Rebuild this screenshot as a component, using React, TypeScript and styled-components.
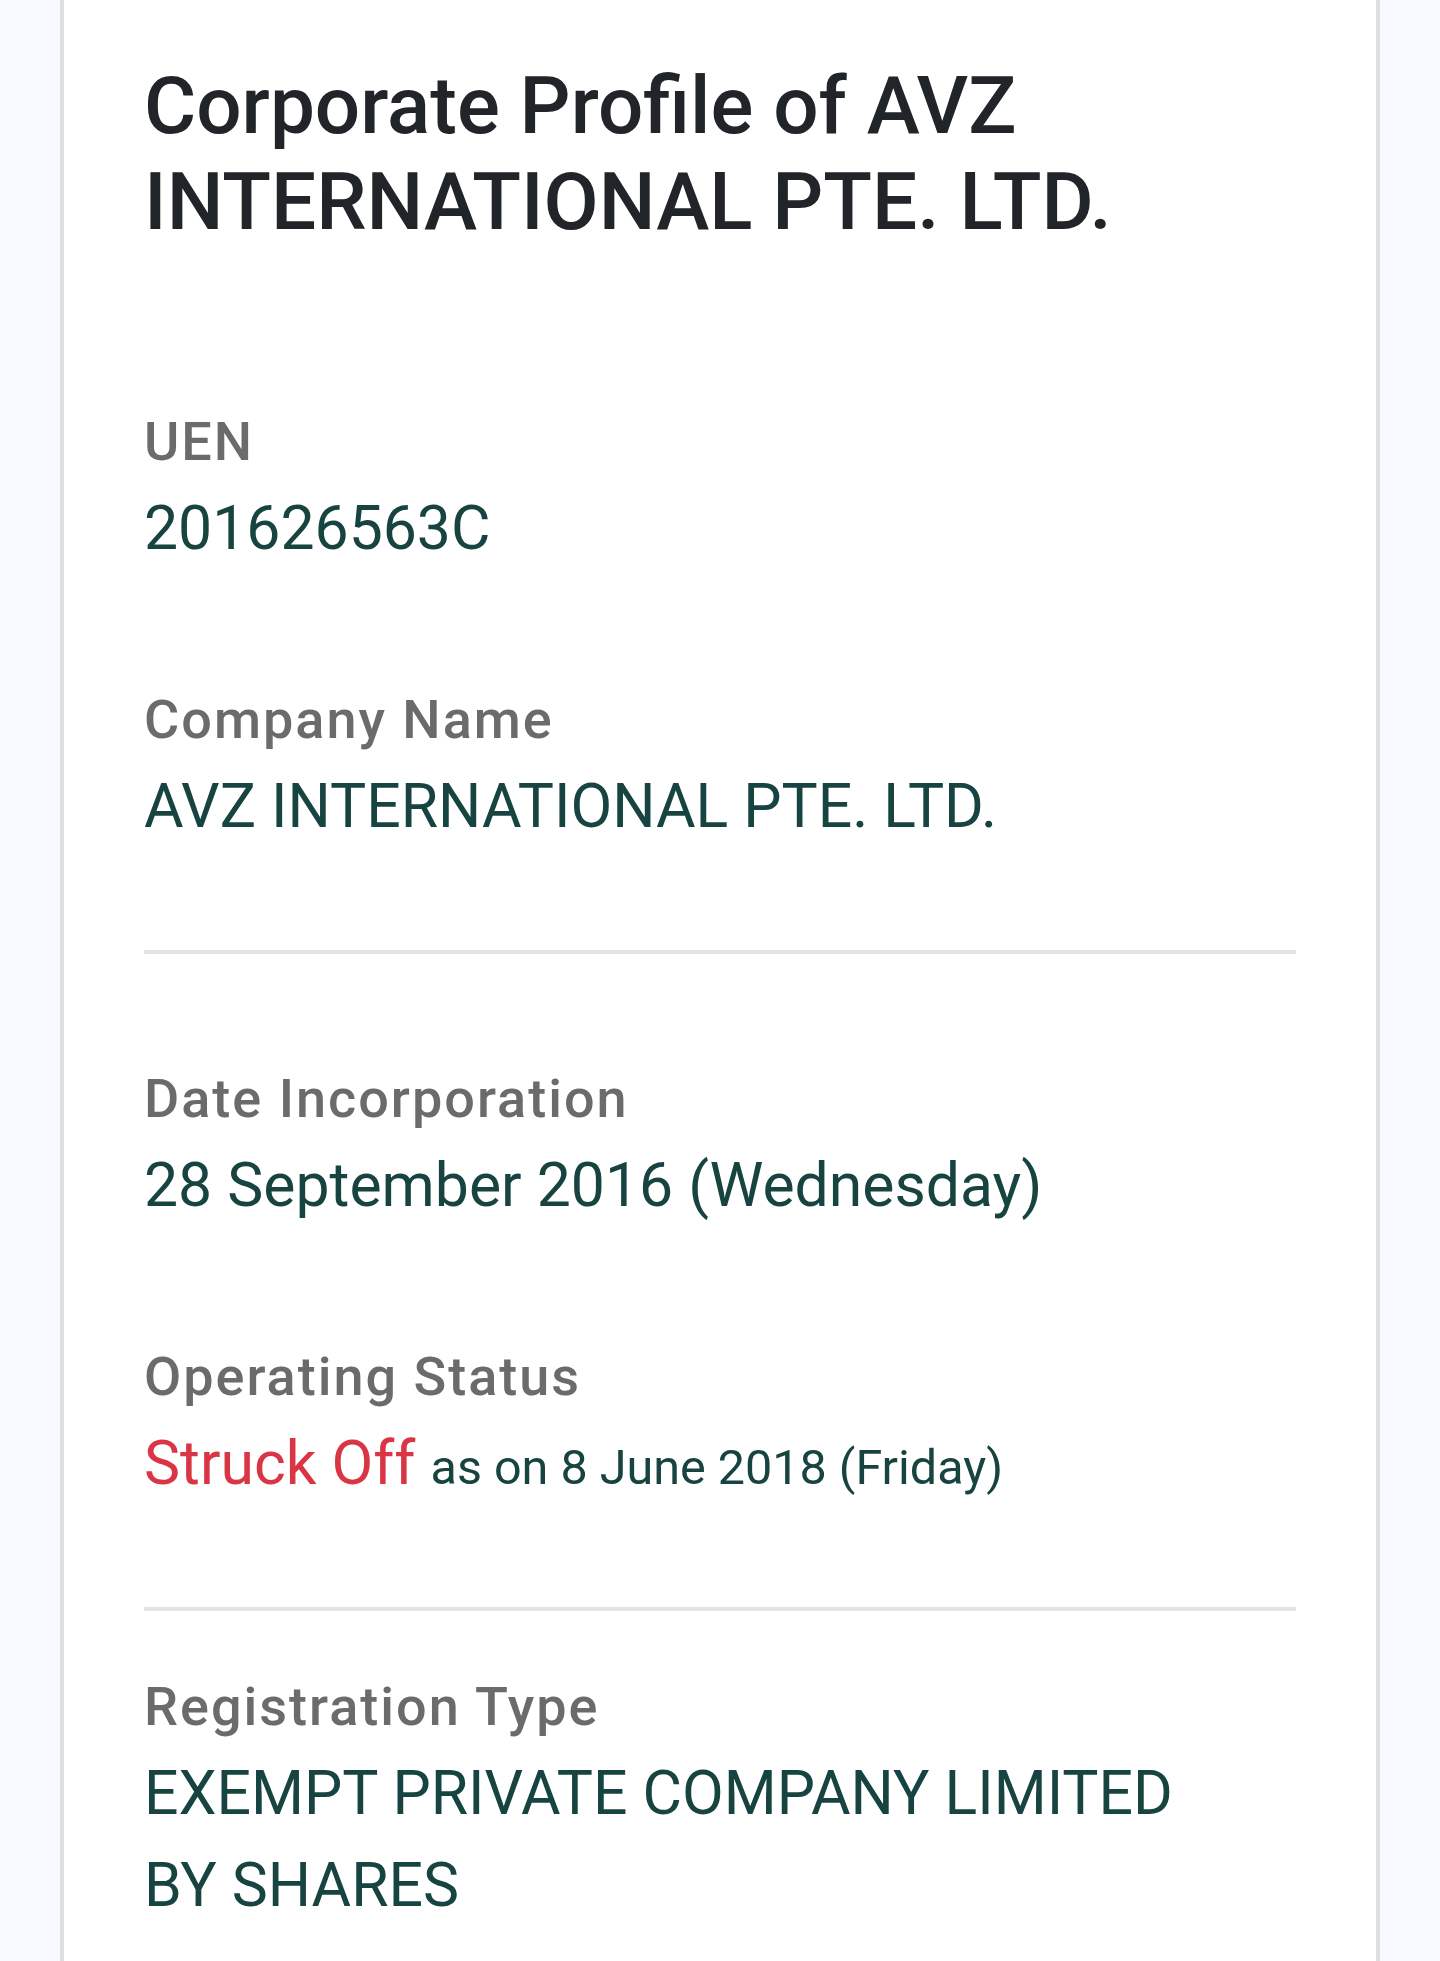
import React from "react";
import styled, { createGlobalStyle } from "styled-components";

const GlobalStyle = createGlobalStyle`
  html, body {
    margin: 0;
    padding: 0;
    background: #f6f9fe;
  }
  body {
    font-family: Roboto, "Noto Sans", "Liberation Sans", sans-serif;
  }
`;

const Page = styled.div`
  display: flex;
  justify-content: center;
  min-height: 1961px;
  background: #f6f9fe;
`;

const Card = styled.main`
  display: flex;
  flex-direction: column;
  width: 1152px;
  background: #ffffff;
  border-left: 4px solid #dedede;
  border-right: 4px solid #dedede;
  padding: 58px 80px 0;
  box-sizing: content-box;
`;

const Title = styled.h1`
  margin: 0 0 151px;
  font-family: Roboto, "Liberation Sans", sans-serif;
  font-weight: 500;
  font-size: 80px;
  line-height: 96px;
  color: #212529;
`;

const Field = styled.section`
  margin-bottom: 97px;

  & + & {
    margin-top: 7px;
  }

  &:last-child {
    margin-bottom: 0;
  }
`;

const Label = styled.div`
  margin-bottom: 1px;
  font-family: Roboto, "Liberation Sans", sans-serif;
  font-weight: 500;
  font-size: 54px;
  line-height: 81px;
  color: #6b6b6b;
  letter-spacing: 2px;
`;

const Value = styled.div`
  font-family: Roboto, "Liberation Sans", sans-serif;
  font-weight: 400;
  font-size: 60.7px;
  line-height: 92px;
  color: #174441;
`;

const Status = styled.span`
  color: #d93545;
`;

const Since = styled.span`
  font-size: 48.5px;
  line-height: 1;
  color: #174441;
`;

const Divider = styled.hr<{ $after: number }>`
  border: 0;
  height: 4px;
  width: 100%;
  flex-shrink: 0;
  background: #e4e4e4;
  margin: 0 0 ${(p) => p.$after}px;
`;

export default function App() {
  return (
    <>
      <GlobalStyle />
      <Page>
        <Card>
          <Title>
            Corporate Profile of AVZ
            <br />
            INTERNATIONAL PTE. LTD.
          </Title>

          <Field>
            <Label>UEN</Label>
            <Value>201626563C</Value>
          </Field>

          <Field>
            <Label>Company Name</Label>
            <Value>AVZ INTERNATIONAL PTE. LTD.</Value>
          </Field>

          <Divider $after={104} />

          <Field>
            <Label>Date Incorporation</Label>
            <Value>28 September 2016 (Wednesday)</Value>
          </Field>

          <Field>
            <Label>Operating Status</Label>
            <Value>
              <Status>Struck Off</Status> <Since>as on 8 June 2018 (Friday)</Since>
            </Value>
          </Field>

          <Divider $after={55} />

          <Field>
            <Label>Registration Type</Label>
            <Value>
              EXEMPT PRIVATE COMPANY LIMITED
              <br />
              BY SHARES
            </Value>
          </Field>
        </Card>
      </Page>
    </>
  );
}
